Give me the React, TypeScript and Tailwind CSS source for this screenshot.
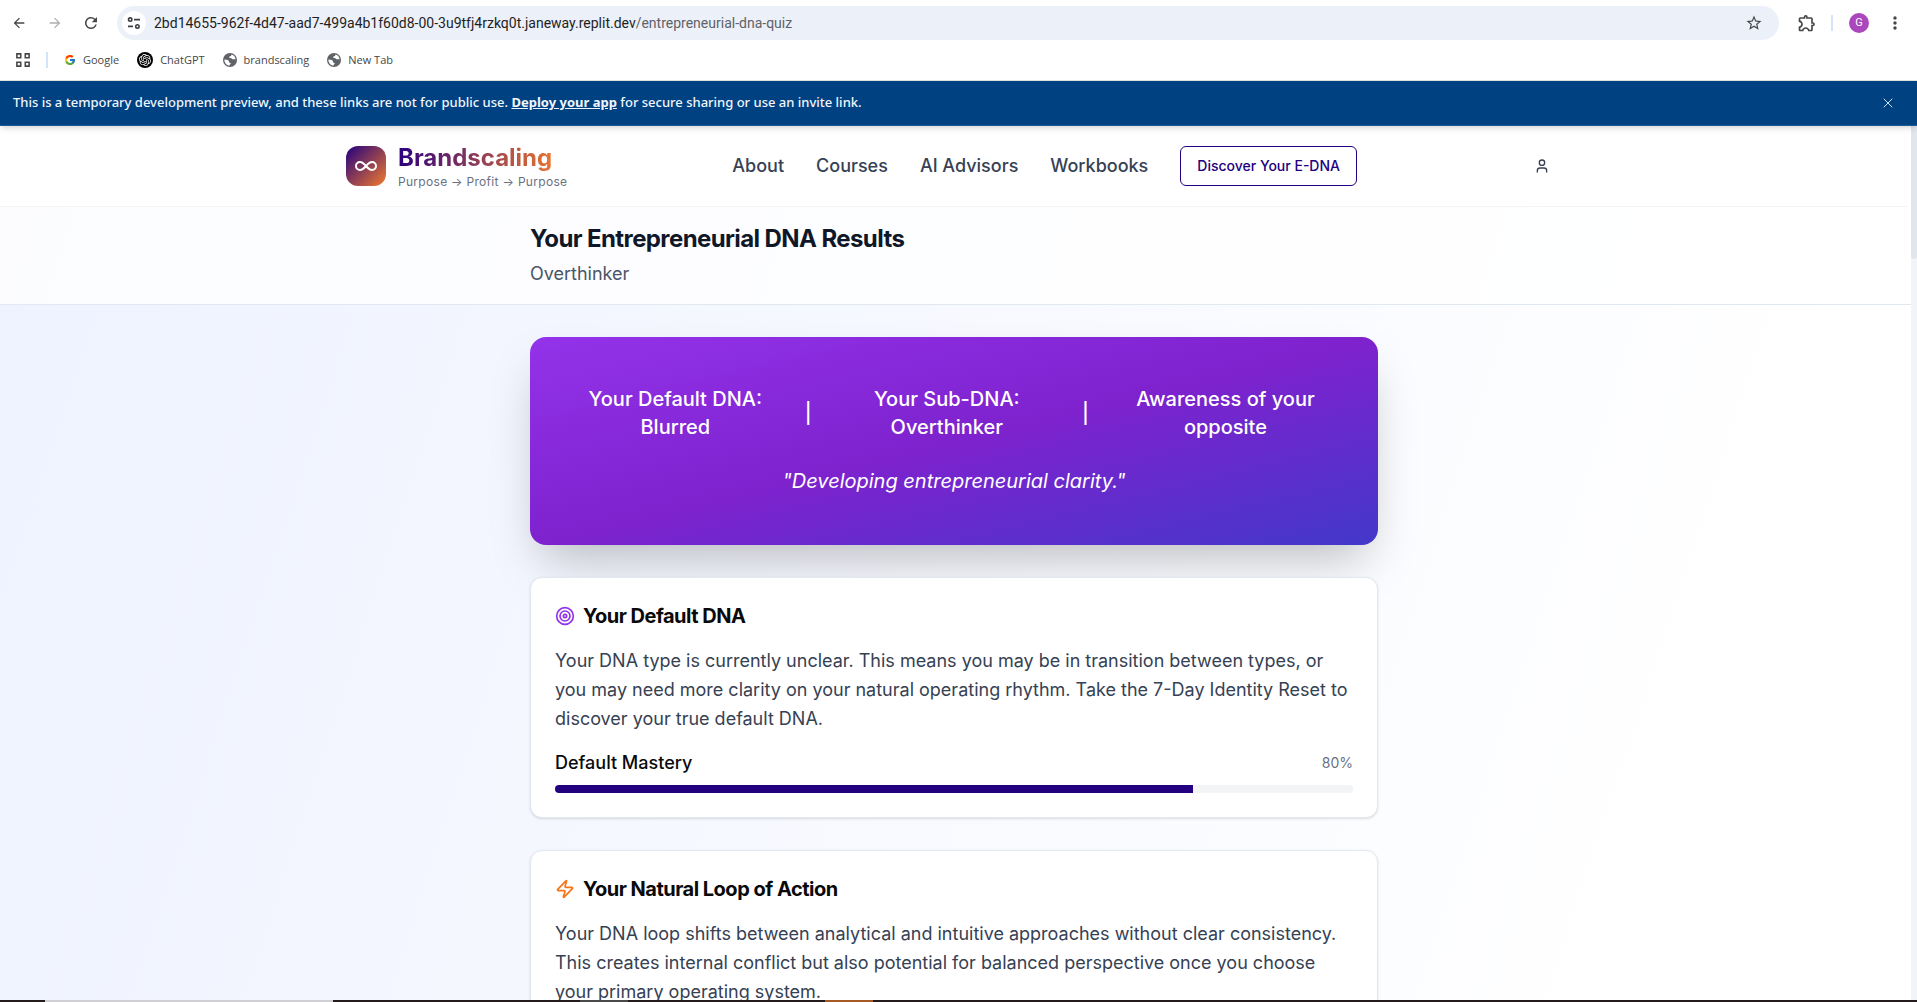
import type { ReactNode } from 'react';
import { Infinity as InfinityIcon, Target, User, X, Zap } from 'lucide-react';
import { MdArrowBack, MdArrowForward, MdMoreVert, MdOutlineExtension, MdRefresh, MdStarBorder } from 'react-icons/md';
import { FcGoogle } from 'react-icons/fc';
import { SiOpenai } from 'react-icons/si';

function TuneIcon() {
  return (
    <svg viewBox="0 0 14 14" className="size-3.5" fill="none" stroke="#3c4043" strokeWidth="1.6" aria-hidden="true">
      <circle cx="3.2" cy="3.6" r="1.7" />
      <path d="M7 3.6h6M1 10.4h5" />
      <circle cx="10.4" cy="10.4" r="1.7" />
    </svg>
  );
}

function AppsIcon() {
  return (
    <svg viewBox="0 0 14 14" className="size-3.5" fill="none" stroke="#474747" strokeWidth="1.6" aria-hidden="true">
      <path d="M.9.9h3.8v3.8H.9zM9.3.9h3.8v3.8H9.3zM.9 9.3h3.8v3.8H.9zM9.3 9.3h3.8v3.8H9.3z" />
    </svg>
  );
}

function GlobeIcon() {
  return (
    <svg viewBox="0 0 14 14" className="size-3.5" aria-hidden="true">
      <circle cx="7" cy="7" r="7" fill="#5f6368" />
      <path
        d="M7.6 1.4c1 .3.9 1.2.2 1.6-.8.5-1.6.3-1.8 1.1-.2.7.6.9 1.4.9 1.3 0 1.4.9 2.1 1.2.9.4 2.1-.3 3 .4.2-2.8-1.8-5-4.9-5.2zM1.4 6.4c1.6.2 3.8.3 4.4 1.3.4.7-.2 1.3.4 1.7.7.4 1.5.1 1.5.9 0 .9-1 1-1.1 2.2-3-.1-5.4-2.8-5.2-6.1z"
        fill="#fff"
      />
    </svg>
  );
}

function Bookmark({ icon, label }: { icon: ReactNode; label: string }) {
  return (
    <a href="#" className="flex items-center gap-[7px]">
      {icon}
      <span>{label}</span>
    </a>
  );
}

function BrowserChrome() {
  return (
    <div className="shrink-0 border-b border-[#dfe3dc] bg-white font-['Open_Sans',sans-serif] text-[#474747]">
      <div className="flex items-center pt-1.5 pr-3 pl-[11px]">
        <button aria-label="Back" className="mr-5 flex w-4 justify-center"><MdArrowBack className="size-4 shrink-0" /></button>
        <button aria-label="Forward" className="mr-5 flex w-4 justify-center text-[#b0b0b0]"><MdArrowForward className="size-4 shrink-0" /></button>
        <button aria-label="Reload" className="mr-[18px] flex w-4 justify-center"><MdRefresh className="size-4.5 shrink-0" /></button>
        <div className="flex h-[34px] flex-1 items-center rounded-full bg-[#ecf0f9] pr-4 pl-[5px]">
          <button aria-label="Site information" className="mr-2 flex size-6 items-center justify-center rounded-full bg-white"><TuneIcon /></button>
          <div className="flex-1 font-['Roboto',sans-serif] text-sm text-[#1f1f1f]">
            2bd14655-962f-4d47-aad7-499a4b1f60d8-00-3u9tfj4rzkq0t.janeway.replit.dev<span className="text-[#5f6368]">/entrepreneurial-dna-quiz</span>
          </div>
          <button aria-label="Bookmark this page"><MdStarBorder className="size-4.5" /></button>
        </div>
        <button aria-label="Extensions" className="ml-[18px]"><MdOutlineExtension className="size-5" /></button>
        <span className="mr-4 ml-3.5 h-4 w-0.5 bg-[#d3e3fd]" />
        <button aria-label="Profile" className="flex size-5 items-center justify-center rounded-full bg-[#ab47bc] font-['Roboto',sans-serif] text-[11px] text-white">G</button>
        <button aria-label="Menu" className="ml-4"><MdMoreVert className="size-5" /></button>
      </div>
      <nav aria-label="Bookmarks" className="flex h-10 items-center gap-4 pl-4 text-[11px] leading-4">
        <button aria-label="Apps"><AppsIcon /></button>
        <span className="h-4 w-0.5 bg-[#d3e3fd]" />
        <div className="flex items-center gap-[18px]">
          <Bookmark icon={<FcGoogle className="size-3" />} label="Google" />
          <Bookmark
            icon={<span className="flex size-4 items-center justify-center rounded-full bg-black"><SiOpenai className="size-3 text-white" /></span>}
            label="ChatGPT"
          />
          <Bookmark icon={<GlobeIcon />} label="brandscaling" />
          <Bookmark icon={<GlobeIcon />} label="New Tab" />
        </div>
      </nav>
    </div>
  );
}

function PreviewBanner() {
  return (
    <div className="relative z-10 flex h-[45px] shrink-0 items-center justify-between border-b border-[#1a5a96] bg-[#004182] px-[13px] font-['Noto_Sans',sans-serif] text-[13px] font-medium text-[#f0f6fc] shadow-md">
      <p>
        This is a temporary development preview, and these links are not for public use.{' '}
        <a href="#" className="font-bold underline">Deploy your app</a> for secure sharing or use an invite link.
      </p>
      <button aria-label="Dismiss" className="mr-2 text-[#cfe0f2]"><X className="size-4" strokeWidth={1.5} /></button>
    </div>
  );
}

function SiteHeader() {
  return (
    <header className="border-b border-gray-100 bg-white">
      <div className="mx-auto flex h-20 max-w-7xl items-center justify-between px-8">
        <a href="#" className="flex items-center gap-3">
          <span className="flex size-10 items-center justify-center rounded-xl bg-linear-to-br/srgb from-[#230080] to-[#f27a2c]">
            <InfinityIcon className="size-6 text-white" />
          </span>
          <span className="flex flex-col">
            <span className="self-start bg-linear-to-r/srgb from-[#2d0080] to-[#e8732f] bg-clip-text text-2xl leading-8 font-bold text-transparent">Brandscaling</span>
            <span className="text-xs leading-4 tracking-wide text-gray-500">Purpose → Profit → Purpose</span>
          </span>
        </a>
        <nav aria-label="Main" className="flex items-center gap-8 text-lg font-medium text-gray-700">
          <a href="#">About</a>
          <a href="#">Courses</a>
          <a href="#">AI Advisors</a>
          <a href="#">Workbooks</a>
          <button className="h-10 rounded-md border border-[#230080] bg-white px-4 text-sm font-medium text-[#230080]">Discover Your E-DNA</button>
        </nav>
        <button aria-label="Account" className="flex h-9 items-center px-3 text-gray-700"><User className="size-4" /></button>
      </div>
    </header>
  );
}

function Card({ icon, title, text, children }: { icon: ReactNode; title: string; text: string; children?: ReactNode }) {
  return (
    <section className="rounded-xl border border-slate-200 bg-white p-6 shadow-sm">
      <h2 className="mb-4 flex items-center gap-2 text-xl leading-7 font-bold tracking-tight text-[#0a0a0a]">
        {icon}
        {title}
      </h2>
      <p className="text-lg leading-[29px] text-gray-700">{text}</p>
      {children}
    </section>
  );
}

function ResultsPage() {
  const mastery = 80;
  return (
    <>
      <div className="mr-[-3px] border-b border-slate-200 bg-white/80 pr-[3px]">
        <div className="mx-auto max-w-4xl px-6 py-4">
          <h1 className="text-2xl leading-8 font-bold tracking-tight text-gray-900">Your Entrepreneurial DNA Results</h1>
          <p className="mt-1 text-lg leading-[29px] text-gray-600">Overthinker</p>
        </div>
      </div>
      <main className="mx-auto flex max-w-4xl flex-col gap-8 px-6 py-8">
        <section className="rounded-2xl bg-linear-to-br/srgb from-[#9333ea] via-[#7e22ce] to-[#4338ca] p-12 text-center text-xl text-white shadow-2xl">
          <div className="mb-6 flex items-center justify-center gap-8 leading-7 font-medium">
            <div>Your Default DNA: Blurred</div>
            <div>|</div>
            <div>Your Sub-DNA: Overthinker</div>
            <div>|</div>
            <div>Awareness of your opposite</div>
          </div>
          <p className="leading-8 italic">"Developing entrepreneurial clarity."</p>
        </section>
        <Card
          icon={<Target className="size-5 text-[#9333ea]" />}
          title="Your Default DNA"
          text="Your DNA type is currently unclear. This means you may be in transition between types, or you may need more clarity on your natural operating rhythm. Take the 7-Day Identity Reset to discover your true default DNA."
        >
          <div className="mt-4 mb-2 flex items-center justify-between">
            <span id="mastery" className="text-lg leading-7 font-medium text-[#0a0a0a]">Default Mastery</span>
            <span className="text-sm text-gray-500">{mastery}%</span>
          </div>
          <div role="progressbar" aria-labelledby="mastery" aria-valuenow={mastery} className="h-2 overflow-hidden rounded-full bg-gray-100">
            <div className="h-full bg-[#230080]" style={{ width: `${mastery}%` }} />
          </div>
        </Card>
        <Card
          icon={<Zap className="size-5 text-[#f97316]" />}
          title="Your Natural Loop of Action"
          text="Your DNA loop shifts between analytical and intuitive approaches without clear consistency. This creates internal conflict but also potential for balanced perspective once you choose your primary operating system."
        />
      </main>
    </>
  );
}

function Taskbar() {
  return (
    <div className="flex h-0.5 shrink-0 bg-[#241c1c]">
      <div className="ml-[45px] w-72 bg-[#d0d0d4]" />
      <div className="ml-[247px] w-12 bg-[#4a4a4a]" />
      <div className="ml-[197px] w-12 bg-[#a85a24]" />
    </div>
  );
}

export default function App() {
  return (
    <div className="flex h-screen flex-col overflow-hidden bg-[#d3e3fd]">
      <BrowserChrome />
      <PreviewBanner />
      <div className="flex min-h-0 flex-1 bg-white font-['Inter',sans-serif]">
        <div className="min-w-0 flex-1 overflow-hidden bg-[linear-gradient(108deg,#eef2ff_0px,#ffffff_1816px)]">
          <div className="bg-white pr-[3px]"><SiteHeader /></div>
          <div className="pr-[3px]"><ResultsPage /></div>
        </div>
        <div className="w-1.5 bg-slate-100">
          <div className="h-[133px] rounded-b bg-[#e0e6ee]" />
        </div>
      </div>
      <Taskbar />
    </div>
  );
}
